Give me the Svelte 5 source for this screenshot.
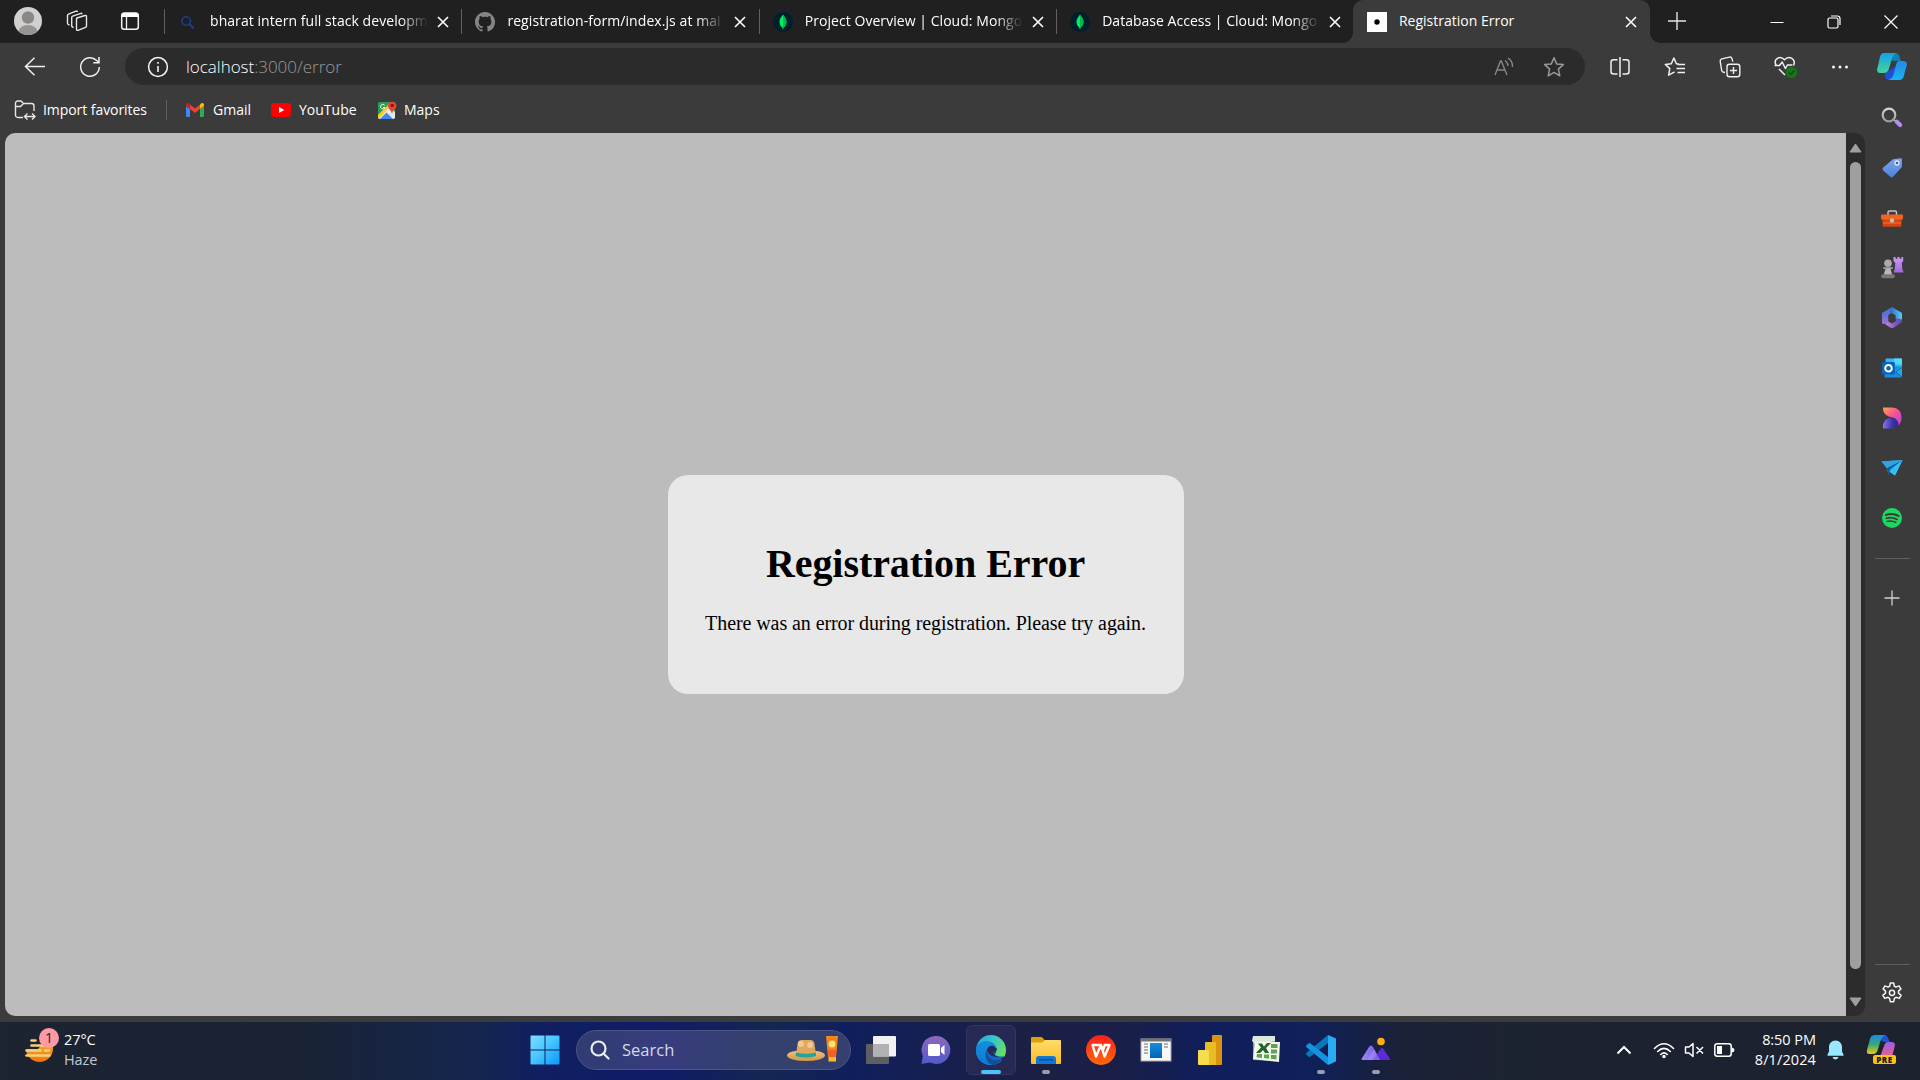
<script>
  const tabs = [
    { icon: 'search', title: 'bharat intern full stack developm', sp: 0.06 },
    { icon: 'github', title: 'registration-form/index.js at mai', sp: 0.07 },
    { icon: 'mongo', title: 'Project Overview | Cloud: Mongo', sp: 0.05 },
    { icon: 'mongo', title: 'Database Access | Cloud: Mongo', sp: 0.02 },
    { icon: 'page', title: 'Registration Error', active: true, sp: 0 }
  ];
  const sidebar = [
    { name: 'find', dy: 0.5 },
    { name: 'tag', dy: 1 },
    { name: 'toolbox', dy: 2 },
    { name: 'games', dy: 0.5 },
    { name: 'm365', dy: 1 },
    { name: 'outlook', dy: 0.5 },
    { name: 'designer', dy: 0 },
    { name: 'telegram', dy: 1 },
    { name: 'spotify', dy: 0 }
  ];
  const apps = [
    { name: 'taskview' },
    { name: 'chat' },
    { name: 'edge', active: true },
    { name: 'explorer', running: true },
    { name: 'wps' },
    { name: 'window' },
    { name: 'powerbi' },
    { name: 'excel' },
    { name: 'vscode', running: true },
    { name: 'photos', running: true }
  ];
</script>

{#snippet closeX()}
  <svg width="12" height="12" viewBox="0 0 12 12"><path d="M1 1l10 10M11 1L1 11" stroke="#fff" stroke-width="1.6" fill="none" /></svg>
{/snippet}

{#snippet favicon(name)}
  {#if name === 'search'}
    <svg width="20" height="20" viewBox="0 0 20 20" fill="none" stroke="#1f3f85"><circle cx="8.2" cy="9" r="4.3" stroke-width="1.6" /><path d="M11.5 12.3l4 4" stroke-width="2" /></svg>
  {:else if name === 'github'}
    <svg width="20" height="20" viewBox="0 0 16 16" fill="#858585"><path d="M8 0C3.58 0 0 3.58 0 8c0 3.54 2.29 6.53 5.47 7.59.4.07.55-.17.55-.38 0-.19-.01-.82-.01-1.49-2.01.37-2.53-.49-2.69-.94-.09-.23-.48-.94-.82-1.13-.28-.15-.68-.52-.01-.53.63-.01 1.08.58 1.23.82.72 1.21 1.87.87 2.33.66.07-.52.28-.87.51-1.07-1.78-.2-3.64-.89-3.64-3.95 0-.87.31-1.59.82-2.15-.08-.2-.36-1.02.08-2.12 0 0 .67-.21 2.2.82.64-.18 1.32-.27 2-.27s1.36.09 2 .27c1.53-1.04 2.2-.82 2.2-.82.44 1.1.16 1.92.08 2.12.51.56.82 1.27.82 2.15 0 3.07-1.87 3.75-3.65 3.95.29.25.54.73.54 1.48 0 1.07-.01 1.93-.01 2.2 0 .21.15.46.55.38A8.01 8.01 0 0 0 16 8c0-4.42-3.58-8-8-8z" /></svg>
  {:else if name === 'mongo'}
    <svg width="20" height="20" viewBox="0 0 20 20"><circle cx="10" cy="10" r="10" fill="#021e2b" /><path d="M10 2.6c1 2 3.4 3.5 3.4 7.3 0 2.7-1.4 4.5-2.9 5.6l-.3 1.7h-.6l-.2-1.7c-1.5-1.1-2.9-2.9-2.9-5.6C6.500 6.2 9 4.6 10 2.600z" fill="#00ed64" /><path d="M10 2.600c1 2 3.400 3.500 3.400 7.300 0 2.700-1.400 4.500-2.900 5.600l-.5-.3z" fill="#00b850" /></svg>
  {:else}
    <svg width="20" height="20" viewBox="0 0 20 20"><rect width="20" height="20" fill="#fff" /><circle cx="10" cy="10" r="2.700" fill="#000" /></svg>
  {/if}
{/snippet}

{#snippet sideIcon(name, dy)}
  <svg width="24" height="24" viewBox="0 {-dy} 24 24">
    {#if name === 'find'}
      <path d="M13.500 14l4 3.700" stroke="#c7c7c7" stroke-width="1.500" /><path d="M16.800 16.300l3.300 3.300" stroke="#b98af0" stroke-width="4.200" stroke-linecap="round" /><circle cx="9" cy="9.500" r="6.300" fill="none" stroke="url(#gGrey)" stroke-width="2.200" />
    {:else if name === 'tag'}
      <path d="M13 3.200l7.500-.9a1.300 1.300 0 0 1 1.400 1.400v7.200L13 20.800a2 2 0 0 1-2.800 0l-7-6.300a2 2 0 0 1 0-2.900z" fill="url(#gTag)" /><circle cx="17" cy="7" r="2" fill="#355d9c" stroke="#e4e8f2" stroke-width="1.300" />
    {:else if name === 'toolbox'}
      <path d="M8 8V5.500q0-1.500 1.500-1.500h5.500q1.500 0 1.500 1.500V8" fill="none" stroke="#c4c4c4" stroke-width="1.500" /><rect x="2.500" y="11" width="19" height="8.800" rx="1" fill="#d4460f" /><rect x="1" y="7.600" width="22" height="5" rx="1" fill="#f26322" /><path d="M3 16h18" stroke="#ee5a1b" stroke-width="2" /><circle cx="12" cy="13.500" r="2.200" fill="#bdbdbd" />
    {:else if name === 'games'}
      <path d="M13.500 1.500h2v1.800h2V1.500h2v1.800h2V1.500h1.700v4l-1.500 2 .8 7q1 .8 1 2.500H13.600q0-1.700 1-2.500l.7-7-1.800-2z" fill="url(#gRook)" /><circle cx="8" cy="7.800" r="3.800" fill="#aaa" /><path d="M3.500 11.500h9v2h-2l1.800 6H3.700l1.800-6h-2z" fill="#b8b8b8" /><path d="M3.600 12.200h8.800" stroke="#888" stroke-width="1.500" /><rect x="1.200" y="18.800" width="13.600" height="4" rx="1.800" fill="#777" />
    {:else if name === 'm365'}
      <path d="M12 1.300L2.800 6.500a1.500 1.500 0 0 0-.8 1.300v8.400c0 1.500 1.500 2.200 3 1.500l3.300-2V9l6-4.500c-.2-1.800-1-2.600-2.300-3.200z" fill="url(#g365a)" /><path d="M12 1.300l9 5q1 .6 1 1.800v6.500c0 1-1 1.300-2 .8L15.600 13V9.300L9.500 6z" fill="url(#g365b)" /><path d="M5 18l3.300-2.500 3.700 2 4-2.500v-3l6 1.500v2.800l-8.500 5.500a3 3 0 0 1-3 0z" fill="url(#g365c)" />
    {:else if name === 'outlook'}
      <path d="M6.500 2h14.500q1 0 1 1v10H5.500V3q0-1 1-1z" fill="#35b8f1" /><path d="M14 2h7q1 0 1 1v5h-8z" fill="#50d9ff" /><path d="M5 10h17v11H6q-1.500 0-1.500-1z" fill="#1490df" /><path d="M22 10v10.500L13 14.500z" fill="#28a8ea" /><path d="M22 11l-6.500 4.500L22 20.500" stroke="#0a64ad" fill="none" /><rect x="2" y="5.500" width="13" height="12.500" rx="1.500" fill="#0a64b8" /><circle cx="8.500" cy="11.700" r="3.300" fill="none" stroke="#fff" stroke-width="2" />
    {:else if name === 'designer'}
      <path d="M3 1.500h9.500A9 9 0 0 1 21.500 11v1.500c0 2-1 5-3 7-.2-4.500-2-7-5.500-8C6.500 10.500 3 8 3 1.500z" fill="url(#gDesA)" /><path d="M3 22.500V19c1-5 5-7.500 9-7 4 .5 6.500 3.500 6 7.500-2 2.500-4 3-6 3z" fill="url(#gDesB)" />
    {:else if name === 'telegram'}
      <path d="M1.500 4.500L22.500 3 15 18.500l-6-3.800-.6 3.200L6.800 11z" fill="#2fa8ec" /><path d="M22.500 3L6.800 11l1.600 6.900L10.500 12z" fill="#0b5d9e" /><path d="M1.500 4.500L22.500 3 6.800 11z" fill="#2ea5e2" /><path d="M22.500 3L15 18.500l-5.500-4.300z" fill="#36bdf3" />
    {:else if name === 'spotify'}
      <circle cx="12" cy="12" r="10" fill="#1ed760" /><g fill="none" stroke="#3b3b3b" stroke-linecap="round"><path d="M5.800 8.900c4-1.300 9-1 12.700 1" stroke-width="2" /><path d="M6.400 12.300c3.500-1 7.500-.6 10.700 1.100" stroke-width="1.700" /><path d="M7 15.400c3-.8 6.200-.5 8.800 1" stroke-width="1.500" /></g>
    {/if}
  </svg>
{/snippet}

{#snippet appIcon(name)}
  <svg width="32" height="32" viewBox="0 0 32 32">
    {#if name === 'taskview'}
      <rect x="1" y="10" width="23" height="20" rx="1" fill="#5f5f63" /><rect x="8" y="2" width="23" height="20.500" rx="1" fill="#f1f1f3" /><path d="M8 10h16v12.500H8z" fill="#b2b2b5" />
    {:else if name === 'chat'}
      <path d="M16 2a14 14 0 1 1-6 26.500L1.500 30l1.300-8A14 14 0 0 1 16 2z" fill="url(#gChat)" /><rect x="8" y="10" width="12" height="12" rx="1.500" fill="#fff" /><path d="M21 14l3.500-3v10L21 18z" fill="#fff" />
    {:else if name === 'edge'}
      <circle cx="16" cy="16" r="15" fill="url(#gEdgeA)" /><path d="M1 17C1 9 7 7.500 11.500 7.500c6 0 10 3.500 10 8 0 2-2.500 3-1.500 5 1.500 2.500 6.500 2.500 9 1.200C26.500 28 21 31 16 31 8 31 1 25 1 17z" fill="#1067c8" /><path d="M1 17C1 10 6 7.500 11.500 7.500c5 0 8.500 2.500 9.500 6-3-2.500-8-1.500-9.500 2.500-1.800 5 1.500 12 6.500 14.900C9 32 1 25.500 1 17z" fill="url(#gEdgeB)" /><path d="M11.500 16c0 8 7 12 14 9.500l2.500-1.300C25.500 28.500 21 31 17.500 31 12 29 9 22 11.500 16z" fill="#124f97" /><path d="M19 20c-2-3 1-3 1-5.500 0-2-1.500-2.700-3-2.700-3 0-4.500 2-4.800 4.200 1 5 7 8.500 14 6-4 .7-6 0-7.200-2z" fill="#252957" /><path d="M18.500 16.500q1.500-1 1.500-3l2 1-2 6z" fill="#252957" /><path d="M26 24.500l3.500-2 .8 2-3 3z" fill="#252957" />
    {:else if name === 'explorer'}
      <path d="M1 4q0-1 1-1h9q1 0 1.600.7L15 6.500H30V12H1z" fill="#dfa006" /><path d="M1 8.500h11l3-2.500h15q1 0 1 1v22q0 1-1 1H2q-1 0-1-1z" fill="url(#gFolder)" /><path d="M6 30v-5q0-3 3-3h14q3 0 3 3v5z" fill="#1277d2" /><path d="M9 25.700h14" stroke="#07509a" stroke-width="1.500" />
    {:else if name === 'wps'}
      <circle cx="16" cy="16" r="15" fill="url(#gWps)" /><path d="M6.500 11h9.500M7.500 11l3.500 11.500 5-11.500 3.500 11.500L24.500 11h-4.700L18 16" fill="none" stroke="#fff" stroke-width="2.500" stroke-linejoin="round" />
    {:else if name === 'window'}
      <rect x="1" y="5" width="30" height="22" fill="#f7f7f7" stroke="#aaa" /><path d="M1 4.700h30v2.800H1z" fill="#737373" /><path d="M10 9h12v15H10z" fill="url(#gWin)" /><path d="M4 10h4M4 13h4M4 16h4M4 19h4M24 10h4M24 13h4" stroke="#9a9a9a" stroke-width="1.300" />
    {:else if name === 'powerbi'}
      <path d="M18 1h8q1 0 1 1v28q0 1-1 1H17V2q0-1 1-1z" fill="#d99310" /><path d="M11 8h9q1 0 1 1v22H10V9q0-1 1-1z" fill="#e9bb25" /><path d="M4 16h9q1 0 1 1v14H4q-1 0-1-1V17q0-1 1-1z" fill="#f7dc50" />
    {:else if name === 'excel'}
      <path d="M3 2h21l1 5v20l-22-1z" fill="#85ad7b" /><path d="M3 2h22v5L5 10 2 7z" fill="#dce8db" /><path d="M5 7.500L30 8l-1 20-26-3z" fill="#f4f8f1" /><g fill="#5da64e"><path d="M7 20h5v4l-5.500-.7zM14 20.500h5v4.200l-5-.6zM21 21h5.500v4.500l-5.500-.7zM21 15.500h6v4h-6zM21 10h6.500v4H21z" /></g><path d="M8 9.500h4l2 3 3-3.500h4l-5 5 3 5h-4l-2-3-3 3H6l5-5.500z" fill="#246327" />
    {:else if name === 'vscode'}
      <path d="M23 1l8 3.500v23L23 31z" fill="#29aaf2" /><path d="M23 1v8L5.500 22.500q-1 .8-2 0l-2-1.800q-1-1 0-2z" fill="#0879bd" /><path d="M23 31v-8L5.500 9.500q-1-.8-2 0l-2 1.800q-1 1 0 2z" fill="#1593dd" />
    {:else if name === 'photos'}
      <path d="M1.500 25q0 1 1.300 1H20l-7-13q-2-3-4 0z" fill="url(#gPeak)" /><path d="M13 26l7.500-11q1.500-2 3 0l6 9q1.500 2-.7 2z" fill="#5b2bd8" /><path d="M7 26h13L14 15z" fill="#b0a1fa" opacity=".45" /><circle cx="21" cy="7.500" r="3.800" fill="#ffad13" />
    {/if}
  </svg>
{/snippet}

<svg class="defs" width="0" height="0">
  <defs>
    <linearGradient id="gGrey" x2="0" y2="1"><stop stop-color="#d6d6d6" /><stop offset="1" stop-color="#9b9b9b" /></linearGradient>
    <linearGradient id="gTag" x2="0" y2="1"><stop stop-color="#7ba6f0" /><stop offset="1" stop-color="#4f82d8" /></linearGradient>
    <linearGradient id="gRook" x2="0" y2="1"><stop stop-color="#d19af5" /><stop offset="1" stop-color="#a066e0" /></linearGradient>
    <linearGradient id="g365a" x2="0" y2="1"><stop stop-color="#3f7be0" /><stop offset=".45" stop-color="#5d73d8" /><stop offset="1" stop-color="#a574d9" /></linearGradient>
    <linearGradient id="g365b"><stop stop-color="#2f63c4" /><stop offset="1" stop-color="#55cdf5" /></linearGradient>
    <linearGradient id="g365c"><stop stop-color="#c68ae6" /><stop offset=".6" stop-color="#8556c0" /><stop offset="1" stop-color="#3f55b8" /></linearGradient>
    <linearGradient id="gDesA" x2="1" y2="1"><stop stop-color="#ffa94b" /><stop offset=".45" stop-color="#f7558d" /><stop offset="1" stop-color="#a940f0" /></linearGradient>
    <linearGradient id="gDesB" x1="0" x2="1"><stop stop-color="#8b72f6" /><stop offset=".6" stop-color="#3c35a8" /><stop offset="1" stop-color="#34268a" /></linearGradient>
    <linearGradient id="gChat" x2="0" y2="1"><stop stop-color="#8d68bd" /><stop offset="1" stop-color="#5059c9" /></linearGradient>
    <linearGradient id="gEdgeA" x2="1" y2=".5"><stop stop-color="#21a5e0" /><stop offset=".5" stop-color="#35c4cf" /><stop offset="1" stop-color="#69e05c" /></linearGradient>
    <linearGradient id="gEdgeB" x2="0" y2="1"><stop stop-color="#138fe0" /><stop offset="1" stop-color="#0d78d6" /></linearGradient>
    <linearGradient id="gFolder" x2="0" y2="1"><stop stop-color="#ffdb6b" /><stop offset="1" stop-color="#fdbd23" /></linearGradient>
    <linearGradient id="gWps" x2="0" y2="1"><stop stop-color="#fd1d1d" /><stop offset="1" stop-color="#ff6a09" /></linearGradient>
    <linearGradient id="gWin" x2="0" y2="1"><stop stop-color="#168ddd" /><stop offset="1" stop-color="#0663b5" /></linearGradient>
    <linearGradient id="gPeak"><stop stop-color="#a08df8" /><stop offset="1" stop-color="#6b4ce5" /></linearGradient>
    <linearGradient id="gCopA" x2="0" y2="1"><stop stop-color="#12a2ea" /><stop offset="1" stop-color="#46d49b" /></linearGradient>
    <linearGradient id="gCopB" x2="0" y2="1"><stop stop-color="#2787e8" /><stop offset="1" stop-color="#18b4f4" /></linearGradient>
    <linearGradient id="gPreA" x2="0" y2="1"><stop stop-color="#1b8be8" /><stop offset=".5" stop-color="#35a877" /><stop offset="1" stop-color="#f3c80c" /></linearGradient>
    <linearGradient id="gPreB" x2="0" y2="1"><stop stop-color="#9a5cf0" /><stop offset="1" stop-color="#f0637c" /></linearGradient>
    <linearGradient id="gSun" x2="0" y2="1"><stop stop-color="#f9c23c" /><stop offset="1" stop-color="#f2720b" /></linearGradient>
    <linearGradient id="gStart" x2="1" y2="1"><stop stop-color="#80dcff" /><stop offset=".5" stop-color="#43c5ff" /><stop offset="1" stop-color="#0798f8" /></linearGradient>
    <linearGradient id="gHat" x2="0" y2="1"><stop stop-color="#f2c888" /><stop offset="1" stop-color="#cf963f" /></linearGradient>
  </defs>
</svg>

<div class="screen">
  <header class="tabstrip">
    <div class="tabtools">
      <svg class="avatar" width="28" height="28" viewBox="0 0 28 28"><clipPath id="av"><circle cx="14" cy="14" r="14" /></clipPath><g clip-path="url(#av)"><rect width="28" height="28" fill="#d2d0ce" /><circle cx="14" cy="10.500" r="6.200" fill="#8a8886" /><ellipse cx="14" cy="24.500" rx="9.500" ry="6.500" fill="#979593" /></g></svg>
      <svg width="22" height="22" viewBox="0 0 22 22" fill="none" stroke="#e6e6e6" stroke-width="1.400" stroke-linejoin="round"><path d="M11 8l8-2.500q1.500-.4 1.500 1V16q0 1-1 1.400L12 20.300q-1.500.4-1.500-1V9q0-.8.500-1z" /><path d="M7.500 17.500l-1-.5q-.8-.4-.8-1.300V7.500q0-1 1-1.400L15 3.300l1.500.3" /><path d="M3.500 15l-1.400-.7q-.6-.5-.6-1.300V5.500q0-1 1-1.400L10 1.200l2 .2" /></svg>
      <svg width="20" height="20" viewBox="0 0 20 20"><rect x="1.700" y="2.200" width="16.600" height="16" rx="2.500" fill="none" stroke="#f2f2f2" stroke-width="1.500" /><path d="M1.500 6V4q0-2.500 2.500-2.500h12q2.500 0 2.500 2.500v2z" fill="#fff" /><path d="M6.500 6v12" stroke="#f2f2f2" stroke-width="1.300" /></svg>
      <i class="vsep"></i>
    </div>
    {#each tabs as tab, i}
      <div class="tab" class:active={tab.active}>
        <span class="favicon">{@render favicon(tab.icon)}</span>
        <span class="title" class:faded={!tab.active} style="letter-spacing:{tab.sp}px">{tab.title}</span>
        <span class="close">{@render closeX()}</span>
        {#if i < 3}<i class="vsep"></i>{/if}
      </div>
    {/each}
    <div class="newtab"><svg width="18" height="18" viewBox="0 0 18 18"><path d="M9 0v18M0 9h18" stroke="#e4e4e4" stroke-width="1.400" /></svg></div>
    <div class="winbtns">
      <svg width="14" height="14" viewBox="0 0 14 14"><path d="M.5 7.500h13" stroke="#fff" /></svg>
      <svg width="14" height="14" viewBox="0 0 14 14" fill="none" stroke="#fff" stroke-width="1.200"><rect x="1" y="3" width="10" height="10" rx="1.500" /><path d="M4 1h6.500q2.500 0 2.500 2.500V10" /></svg>
      <svg width="14" height="14" viewBox="0 0 14 14"><path d="M.5.5l13 13M13.500.5l-13 13" stroke="#fff" stroke-width="1.200" /></svg>
    </div>
  </header>

  <div class="body">
    <div class="main">
      <nav class="toolbar">
        <span class="btn"><svg width="22" height="20" viewBox="0 0 22 20" fill="none" stroke="#f0f0f0" stroke-width="1.500"><path d="M21 9.500H1.500M10.500.8L1.500 9.500l9 8.700" /></svg></span>
        <span class="btn"><svg width="22" height="22" viewBox="0 0 22 22" fill="none" stroke="#f0f0f0" stroke-width="1.500"><path d="M20.300 11a9.300 9.300 0 1 1-2.600-6.500l2.300 2" /><path d="M20 1v5.800h-5.700" /></svg></span>
        <div class="address">
          <svg width="22" height="22" viewBox="0 0 22 22"><circle cx="11" cy="11" r="9.400" fill="none" stroke="#f5f5f5" stroke-width="1.500" /><path d="M11 10v6M11 6v1.800" stroke="#f5f5f5" stroke-width="1.600" /></svg>
          <span class="url">localhost<em>:3000/error</em></span>
          <span class="addricon"><svg width="22" height="20" viewBox="0 0 22 20" fill="none" stroke="#868686" stroke-width="1.400"><path d="M2 18L7.500 4h.8L14 18M4 13h8" /><path d="M12 3.500q3 2 3 5.500M15 1q5 3.500 4.500 9" /></svg></span>
          <span class="addricon"><svg width="22" height="22" viewBox="0 0 22 22"><path d="M11 1.800l2.700 6.100 6.600.7-4.900 4.500 1.400 6.700-5.800-3.400-5.800 3.400 1.400-6.700L1.700 8.600l6.600-.7z" fill="none" stroke="#999" stroke-width="1.500" stroke-linejoin="round" /></svg></span>
        </div>
        <span class="btn"><svg width="22" height="22" viewBox="0 0 22 22" fill="none" stroke="#f0f0f0" stroke-width="1.500"><path d="M8.500 3.700H4.500Q2 3.700 2 6.200v9.300Q2 18 4.500 18h4M13.500 3.700h4Q20 3.700 20 6.200v9.300q0 2.500-2.500 2.500h-4M11 1v20" /></svg></span>
        <span class="btn"><svg width="22" height="22" viewBox="0 0 22 22" fill="none" stroke="#f0f0f0" stroke-width="1.500" stroke-linejoin="round"><path d="M15 7.900l-2.600-.2L9.900 2 7.300 7.700l-6 .7 4.500 4.200-1.200 6.600 6-3.300M13.500 8.500H21M12.500 12.500H21M13.500 16.500H21" /></svg></span>
        <span class="btn"><svg width="22" height="22" viewBox="0 0 22 22" fill="none" stroke="#f0f0f0" stroke-width="1.400"><rect x="8" y="8.300" width="12.800" height="12.500" rx="2.500" /><path d="M14.500 11v7M11 14.500h7M6 16.500l-1.300-.2q-1.500-.2-2-1.700L1.200 5.500q-.3-2 1.500-2.600l7.700-1.800q2-.3 2.600 1.500l.8 3" /></svg></span>
        <span class="btn"><svg width="24" height="24" viewBox="0 0 24 24" fill="none" stroke="#f0f0f0" stroke-width="1.500"><path d="M3 10C0 4 7 0 11.500 4.800 16 0 23.500 4 20.500 10.500M1.500 10.500h5l2.700-3.500 3.200 6.500 2-3.500h5M6 14l6 6" stroke-linejoin="round" /><circle cx="18.500" cy="17.500" r="5.500" fill="#107c10" stroke="none" /><path d="M15.800 17.500l2 2 3.500-4" stroke="#303030" /></svg></span>
        <span class="btn"><svg width="18" height="6" viewBox="0 0 18 6" fill="#f5f5f5"><circle cx="2.500" cy="3" r="1.500" /><circle cx="9" cy="3" r="1.500" /><circle cx="15.500" cy="3" r="1.500" /></svg></span>
      </nav>

      <nav class="favorites">
        <svg width="22" height="20" viewBox="0 0 22 20" fill="none" stroke="#e8e8e8" stroke-width="1.400"><path d="M9 17.500H4Q1.500 17.500 1.500 15V3.500Q1.500 1 4 1h3l2.500 2.500h8Q20 3.500 20 6v5M1.500 6.500h5l3-3" /><path d="M11 16.500h9.500M13.500 13.500l-3 3 3 3M18 13.500l3 3-3 3" /></svg>
        <span class="ft import">Import favorites</span>
        <i class="fsep"></i>
        <svg width="18" height="14" viewBox="0 0 18 14"><path d="M0 3l4 3v8H1.500Q0 14 0 12.500z" fill="#4285f4" /><path d="M18 3l-4 3v8h2.500q1.500 0 1.500-1.500z" fill="#34a853" /><path d="M4 1.500l5 4 5-4V6L9 10 4 6z" fill="#ea4335" /><path d="M0 3V2C0 0 2-.5 3.300.7L4 1.500V6L0 3z" fill="#c5221f" /><path d="M18 3V2c0-2-2-2.500-3.300-1.300L14 1.500V6z" fill="#fbbc04" /></svg>
        <span class="ft gmail">Gmail</span>
        <svg width="20" height="14" viewBox="0 0 20 14"><rect width="20" height="14" rx="3.500" fill="#f00" /><path d="M8 4l5.300 3L8 10z" fill="#fff" /></svg>
        <span class="ft youtube">YouTube</span>
        <svg width="19" height="20" viewBox="0 0 19 20"><rect x="0" y="2" width="17" height="17" rx="2" fill="#2b9d57" /><path d="M0 17L11 6l6 6v5q0 2-2 2H2q-2 0-2-2z" fill="#e5eaf0" /><path d="M2 19l6.500-6.500L15 19z" fill="#4285f4" /><path d="M0 15L12 3h3L1.500 18.500Q0 18.500 0 17z" fill="#fbcd1f" /><path d="M0 13V4q0-2 2-2h9z" fill="#2b9d57" /><path d="M6.600 5.200A2.300 2.300 0 1 0 7 7.500H5" stroke="#fff" fill="none" /><path d="M14 14c-.5-4-4-4.500-4-8.500a4.300 4.300 0 0 1 8.500 0c0 4-4 4.500-4.500 8.500z" fill="#ea4335" /><circle cx="14.200" cy="5.400" r="1.700" fill="#811411" /></svg>
        <span class="ft maps">Maps</span>
      </nav>

      <div class="viewport">
        <main class="page">
          <section class="card">
            <h1>Registration Error</h1>
            <p>There was an error during registration. Please try again.</p>
          </section>
        </main>
        <div class="scrollbar">
          <svg width="13" height="10" viewBox="0 0 13 10"><path d="M6.500 1L12 9H1z" fill="#9f9f9f" stroke="#9f9f9f" stroke-linejoin="round" /></svg>
          <i class="thumb"></i>
          <svg width="13" height="10" viewBox="0 0 13 10"><path d="M6.500 9L12 1H1z" fill="#9f9f9f" stroke="#9f9f9f" stroke-linejoin="round" /></svg>
        </div>
      </div>
    </div>

    <aside class="sidebar">
      <span class="copilot"><svg width="30" height="28" viewBox="0 0 30 28"><path d="M8 20q-1 7 4 7h7l4-16z" fill="#1d4fd8" /><path d="M12 0h6q4 0 5 5l1 3h-7q-3 0-4-3z" fill="#0e7fb0" /><path d="M7 0h13q-4 1-5.500 7l-2.600 9q-1.300 4-5.400 4H3.500q-4 0-3.300-4L3 4q1-4 4-4z" fill="url(#gCopA)" /><path d="M22 8h4q4.500 0 3.800 4l-3 11q-1 4-4.500 4H11q4.500-1 6-7l2-8q.8-4 3-4z" fill="url(#gCopB)" /></svg></span>
      {#each sidebar as item}
        <span class="sideitem">{@render sideIcon(item.name, item.dy)}</span>
      {/each}
      <i class="hsep top"></i>
      <svg class="plus" width="16" height="16" viewBox="0 0 16 16"><path d="M8 .5v15M.5 8h15" stroke="#cfcfcf" stroke-width="1.300" /></svg>
      <i class="hsep bottom"></i>
      <svg class="gear" width="22" height="22" viewBox="0 0 22 22" fill="none" stroke="#f4f4f4" stroke-width="1.500" stroke-linejoin="round"><path d="M9.300 1h3.400l.6 3.100 1.700 1 3-1.200 1.900 3-2.400 2.200v2l2.600 2.200-1.800 3.100-3.300-1.100-1.600 1-.7 3.400H9.300l-.7-3.400-1.600-1-3.300 1.100-1.800-3.100 2.600-2.200v-2L2.100 6.900l1.900-3 3 1.200 1.700-1z" /><circle cx="11" cy="10.800" r="2.600" /></svg>
    </aside>
  </div>

  <footer class="taskbar">
    <div class="weather">
      <svg width="32" height="34" viewBox="0 0 32 34"><circle cx="15.500" cy="20.500" r="13.500" fill="url(#gSun)" /><path d="M0 4h18v12l-4 5H0z" fill="#1c2432" /><g stroke-linecap="round" stroke-width="2.600" stroke="#f5d27c"><path d="M7.500 12.500h4M7.500 17.500h20M2.500 22.500h14M21 22.500h4M2.500 27.500h23" /></g></svg>
      <span class="count">1</span>
      <div class="wtext"><span>27°C</span><span class="dim">Haze</span></div>
    </div>
    <div class="start"><svg width="30" height="30" viewBox="0 0 30 30" fill="url(#gStart)"><path d="M.500 1.500q0-1 1-1h13v14h-14zM15.500.500h13q1 0 1 1v13h-14zM.500 15.500h14v14h-13q-1 0-1-1zM15.500 15.500h14v13q0 1-1 1h-13z" /></svg></div>
    <div class="search">
      <svg width="20" height="20" viewBox="0 0 20 20" fill="none" stroke="#ececf3" stroke-width="2.200"><circle cx="8.500" cy="8.500" r="7" /><path d="M13.500 13.500l5 5" stroke-linecap="round" /></svg>
      <span>Search</span>
      <svg class="promo" width="52" height="30" viewBox="0 0 52 30"><ellipse cx="19" cy="20.500" rx="19" ry="5.500" fill="url(#gHat)" /><path d="M9 20l1.500-11Q11 5 14.500 5h9Q27 5 27.500 9L29 20q-10 3-20 0z" fill="#dda95d" /><path d="M9 17.500q10 2.500 20 0v3.500q-10 3-20.500 0z" fill="#20a59a" /><circle cx="14" cy="9" r="3" fill="#f2c796" /><circle cx="23" cy="10" r="3" fill="#f2c796" /><path d="M39 1h12l-2 21h-8z" fill="#f88416" /><path d="M40.700 15h8.600l-.7 7h-7z" fill="#f26027" /><rect x="41.500" y="22" width="7.500" height="4.500" fill="#f9bd2e" /><circle cx="45" cy="9" r="3.500" fill="#ffe577" /></svg>
    </div>
    <div class="apps">
      {#each apps as app}
        <div class="app">
          <div class="tile" class:active={app.active}>{@render appIcon(app.name)}</div>
          {#if app.active}<i class="ind wide"></i>{:else if app.running}<i class="ind"></i>{/if}
        </div>
      {/each}
    </div>
    <div class="tray">
      <svg class="chev" width="16" height="10" viewBox="0 0 16 10"><path d="M1.500 8.500L8 2l6.500 6.500" fill="none" stroke="#fff" stroke-width="2" /></svg>
      <svg class="wifi" width="22" height="18" viewBox="0 0 22 18" fill="none" stroke="#fff" stroke-width="1.600" stroke-linecap="round"><path d="M1.500 7.500q9.500-9.500 19 0M4.700 10.500q6.300-6.300 12.600 0M7.800 13.500q3.200-3.200 6.400 0" /><circle cx="11" cy="15.500" r="1" fill="#fff" /></svg>
      <svg class="mute" width="20" height="16" viewBox="0 0 20 16" fill="none" stroke="#fff" stroke-width="1.500" stroke-linejoin="round"><path d="M9 1.500v13L5 11H1.500V5H5zM12.500 5l6.500 6.500M19 5l-6.500 6.500" /></svg>
      <svg class="battery" width="21" height="14" viewBox="0 0 21 14"><rect x=".800" y=".800" width="16.400" height="12.400" rx="2.500" fill="none" stroke="#fff" stroke-width="1.500" /><rect x="3" y="3" width="5" height="8" fill="#fff" /><path d="M18 4.500q2.500.500 2.500 2.500T18 9.500z" fill="#fff" /></svg>
      <div class="clock"><span>8:50 PM</span><span class="date">8/1/2024</span></div>
      <svg class="bell" width="17" height="20" viewBox="0 0 17 20" fill="#98e8ff"><path d="M8.500.5C4.500.5 2 3.500 2 7v4.500L.5 14.500v1.300h16v-1.300L15 11.500V7C15 3.500 12.500.5 8.500.5zM5.500 17h6q-.8 2.500-3 2.500T5.500 17z" /></svg>
      <div class="pre"><svg width="30" height="24" viewBox="0 0 30 24"><path d="M14 0h4q3 0 4.500 4L24 7h-6l-5-3z" fill="#2152d4" /><path d="M9 0h11q-4 1-5.500 6L12 14q-1 5-5 5H3.500Q0 19 1 15L4 4q1-4 5-4z" fill="url(#gPreA)" /><path d="M22 7h3.500q4 0 3.300 4L26 22H14l4-11q1-4 4-4z" fill="url(#gPreB)" /></svg><span>PRE</span></div>
    </div>
  </footer>
</div>

<style>
  :global(body) { margin: 0; background: #3b3b3b; }
  .screen { width: 1920px; height: 1080px; overflow: hidden; display: grid; grid-template-rows: 43px 978px 59px; font-family: 'Open Sans', 'Noto Sans', sans-serif; color: #fff; font-size: 14px; }
  .screen svg { display: block; flex: none; }
  .defs { position: absolute; }
  i { display: block; }

  .tabstrip { display: flex; align-items: stretch; background: #202020; }
  .tabtools { width: 165px; box-sizing: border-box; padding: 0 0 1px 14px; display: flex; align-items: center; position: relative; }
  .tabtools svg:nth-child(2) { margin-left: 24px; }
  .tabtools svg:nth-child(3) { margin-left: 32px; }
  .vsep { position: absolute; right: 0; top: 9px; width: 1px; height: 25px; background: #606060; }
  .tab { width: 297.400px; box-sizing: border-box; position: relative; display: flex; align-items: center; padding-left: 13px; flex: none; }
  .tab.active { background: #3b3b3b; border-radius: 10px 10px 0 0; width: 297.400px; margin-left: -1.600px; padding-left: 14px; }
  .tab.active::before, .tab.active::after { content: ''; position: absolute; bottom: 0; width: 10px; height: 10px; }
  .tab.active::before { left: -10px; background: radial-gradient(circle at 0 0, #202020 9.500px, #3b3b3b 10px); }
  .tab.active::after { right: -10px; background: radial-gradient(circle at 100% 0, #202020 9.500px, #3b3b3b 10px); }
  .favicon { width: 20px; margin: 1px 12px 0 0; }
  .title { width: 224px; margin-right: -6px; white-space: nowrap; line-height: 22px; margin-bottom: 2px; }
  .faded { mask-image: linear-gradient(90deg, #000 190px, transparent 218px); }
  .close { margin: 1px 0 0 9px; }
  .active .close { margin-left: 8px; }
  .newtab { width: 54px; display: flex; align-items: center; justify-content: center; }
  .newtab svg { margin-top: -2px; }
  .winbtns { margin-left: auto; display: flex; align-items: center; gap: 43px; padding-right: 22px; }

  .body { display: flex; background: #3b3b3b; }
  .main { width: 1865px; display: flex; flex-direction: column; }
  .toolbar { height: 47px; display: flex; align-items: center; gap: 15px; padding-left: 15px; }
  .btn { width: 40px; height: 40px; display: flex; align-items: center; justify-content: center; }
  .address { width: 1460px; height: 37px; box-sizing: border-box; border-radius: 19px; background: #2b2b2b; display: flex; align-items: center; padding: 0 11px 0 21.500px; }
  .url { margin: 0 auto 0 17.500px; font-size: 17px; font-weight: 300; line-height: 26px; letter-spacing: -0.02px; }
  .url em { font-style: normal; color: #9b9b9b; }
  .addricon { width: 50px; display: flex; justify-content: center; }
  .addricon:last-child { width: 40px; margin-left: 5px; }

  .favorites { height: 39px; display: flex; align-items: center; padding-left: 14px; }
  .ft { line-height: 22px; white-space: nowrap; }
  .import { margin-left: 7px; width: 123px; letter-spacing: -0.06px; }
  .fsep { width: 1px; height: 20px; background: #606060; margin-right: 19px; }
  .gmail { margin-left: 9px; width: 58px; }
  .youtube { margin-left: 8px; width: 79px; }
  .maps { margin-left: 7px; }

  .viewport { display: flex; margin: 4px 0 0 5px; height: 883px; border-radius: 10px; overflow: hidden; background: #2c2c2c; }
  .page { width: 1841px; background: #bcbcbc; display: flex; justify-content: center; align-items: flex-start; font-family: 'Liberation Serif', serif; color: #000; }
  .card { margin-top: 342px; width: 516px; height: 219px; box-sizing: border-box; padding-top: 66px; border-radius: 20px; background: #e8e8e8; text-align: center; }
  h1 { margin: 0; font-size: 40px; line-height: 46px; letter-spacing: -0.06px; }
  p { margin: 25px 0 0; font-size: 20px; line-height: 23px; white-space: nowrap; letter-spacing: -0.08px; }
  .scrollbar { width: 19px; display: flex; flex-direction: column; align-items: center; justify-content: space-between; padding: 10px 0 9px 0; box-sizing: border-box; }
  .thumb { width: 11px; height: 807px; border-radius: 6px; background: #9f9f9f; margin-bottom: 19px; }

  .sidebar { width: 55px; box-sizing: border-box; padding-right: 1px; display: flex; flex-direction: column; align-items: center; }
  .copilot { height: 49px; display: flex; align-items: center; }
  .copilot svg { margin-top: -2px; }
  .sideitem { height: 50.100px; display: flex; align-items: center; }
  .hsep { width: 35px; height: 1px; background: #606060; }
  .hsep.top { margin-top: 15px; }
  .plus { margin-top: 31px; }
  .hsep.bottom { margin-top: auto; margin-bottom: 17px; }
  .gear { margin-bottom: 17px; }

  .taskbar { box-sizing: border-box; border-top: 1px solid #353b48; padding-bottom: 2px; display: flex; align-items: center; background: linear-gradient(90deg, #1c2331 0, #1a2334 300px, #14254f 480px, #101f61 540px, #101c66 660px, #142652 770px, #101f5c 850px, #171f50 940px, #1b2044 1030px, #191f48 1120px, #101e5c 1210px, #10205a 1310px, #1b2138 1400px, #1c2331 1500px, #1c222e 1920px); }
  .weather { position: relative; width: 518px; height: 56px; display: flex; align-items: center; padding-left: 24px; box-sizing: border-box; }
  .weather svg { margin-top: -10px; }
  .count { position: absolute; left: 39px; top: 6px; width: 20px; height: 20px; border-radius: 50%; background: #ff99a4; color: #222; font-size: 14px; line-height: 20px; text-align: center; }
  .wtext { display: flex; flex-direction: column; line-height: 20px; margin: -1px 0 0 8px; font-size: 14.500px; letter-spacing: -0.1px; }
  .dim { color: #c5c8ce; }
  .start { width: 58px; padding-left: 11.500px; box-sizing: border-box; }
  .search { width: 275px; height: 40px; box-sizing: border-box; border: 1px solid #4c5585; border-radius: 20px; background: linear-gradient(90deg, #303c72, #373c7e 30%, #34406d 65%, #354070); display: flex; align-items: center; padding: 0 11px 0 13px; }
  .search span { margin-left: 12px; font-size: 16.500px; line-height: 24px; color: #d5d8e8; }
  .promo { margin-left: auto; }
  .apps { display: flex; margin-left: 2.500px; }
  .app { width: 55px; height: 50px; position: relative; display: flex; justify-content: center; }
  .tile { width: 50px; height: 50px; box-sizing: border-box; border-radius: 6px; display: flex; align-items: center; justify-content: center; }
  .tile.active { background: #262953; border: 1px solid #33365f; }
  .ind { position: absolute; bottom: 1px; left: 50%; width: 8px; height: 4px; margin-left: -4px; border-radius: 2px; background: #9a9dab; }
  .ind.wide { width: 20px; margin-left: -10px; background: #4cc2ff; }
  .tray { margin-left: auto; display: flex; align-items: center; padding-right: 24px; }
  .wifi { margin-left: 21px; }
  .mute { margin-left: 9px; }
  .battery { margin-left: 10px; }
  .clock { width: 81px; text-align: right; display: flex; flex-direction: column; line-height: 20px; font-size: 14.500px; letter-spacing: -0.05px; margin-top: -1px; }
  .date { letter-spacing: 0.1px; }
  .bell { margin-left: 11px; }
  .pre { margin-left: 22px; width: 30px; height: 30px; position: relative; }
  .pre span { position: absolute; left: 7px; top: 20px; width: 23px; height: 9px; border-radius: 2px; background: #ffc20e; color: #1a1a1a; font-size: 8px; line-height: 9px; font-weight: 800; letter-spacing: 0.6px; text-align: center; }
</style>
